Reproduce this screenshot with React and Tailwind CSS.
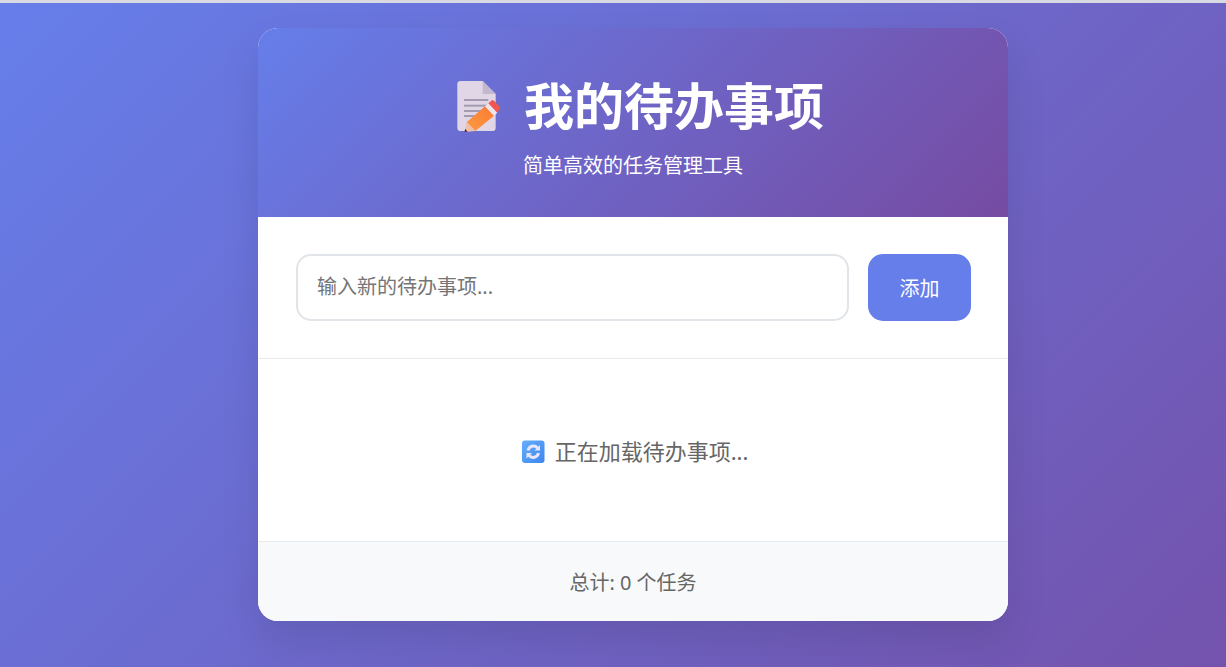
const font = { fontFamily: '"Noto Sans", "Noto Sans CJK SC", sans-serif' };

// drawn on the 3x crop grid of the emoji, hence the odd viewBox
const NoteIcon = () => (
  <svg width="46" height="52" viewBox="48 30 138 156" className="shrink-0">
    <defs>
      <linearGradient id="pencilBody" x1="0" y1="1" x2="1" y2="0">
        <stop offset="0" stopColor="#fb9a45" />
        <stop offset="1" stopColor="#fb7a30" />
      </linearGradient>
    </defs>
    <path d="M52 43a10 10 0 0 1 10-10h66l39 39v101a10 10 0 0 1-10 10H62a10 10 0 0 1-10-10z" fill="#e0d6e6" />
    <path d="M128 33l39 39h-39z" fill="#c3b8d0" />
    <g fill="#a39bb0">
      <rect x="72" y="87" width="73" height="6" />
      <rect x="72" y="104" width="73" height="6" />
      <rect x="72" y="120" width="73" height="6" />
      <rect x="72" y="135" width="40" height="6" />
    </g>
    <path d="M80 157l55-48 27 28-56 46z" fill="url(#pencilBody)" />
    <path d="M135 109l10-9 27 28-10 9z" fill="#efe4ea" />
    <path d="M145 100l9-8a6 6 0 0 1 8 0l17 18a6 6 0 0 1 0 8l-7 10z" fill="#f0574f" />
    <path d="M80 157l26 26-31 3z" fill="#efc0a8" />
    <path d="M75 176l8 9-9 1z" fill="#4a2645" />
  </svg>
);

const RefreshIcon = () => (
  <svg width="24" height="24" viewBox="0 0 24 24" className="shrink-0">
    <defs>
      <linearGradient id="refreshBg" x1="0" y1="0" x2="1" y2="1">
        <stop offset="0" stopColor="#63aefc" />
        <stop offset="1" stopColor="#3f86ee" />
      </linearGradient>
    </defs>
    <rect x="1" y="0.500" width="22.500" height="22.500" rx="3" fill="url(#refreshBg)" />
    <g fill="none" stroke="#e9e6fb" strokeWidth="3">
      <path d="M7 10.500a5.500 5.500 0 0 1 9.500-2.500" />
      <path d="M17.500 13a5.500 5.500 0 0 1-9.500 2.500" />
    </g>
    <path d="M19 5v5.500h-5.500z" fill="#e9e6fb" />
    <path d="M5.500 18.500V13H11z" fill="#e9e6fb" />
  </svg>
);

export default function App() {
  return (
    <div className="min-h-screen bg-[linear-gradient(135deg,#667eea_0%,#764ba2_118%)] border-t-[3px] border-[#d9d9e3] pt-[25px] pb-[46px]" style={font}>
      <div className="ml-[258px] w-[750px] rounded-[20px] overflow-hidden bg-white shadow-[0_20px_40px_rgba(0,0,0,0.1)]">
        <header className="h-[189px] bg-[linear-gradient(135deg,#667eea_0%,#764ba2_100%)] text-white flex flex-col items-center pt-[44px]">
          <h1 className="flex items-center gap-[22px] text-[50px] font-bold leading-[68px] ml-[14px]">
            <NoteIcon />
            <span>我的待办事项</span>
          </h1>
          <p className="text-[20px] leading-[28px] mt-[12px]">简单高效的任务管理工具</p>
        </header>

        <div className="flex gap-[19px] pl-[38px] pr-[37px] py-[37px] border-b border-[#e9ecef]">
          <input
            type="text"
            placeholder="输入新的待办事项..."
            className="flex-1 min-w-0 h-[67px] rounded-[15px] border-2 border-[#e1e5e9] px-[19px] pb-[2px] text-[20px] outline-none placeholder:text-[#757575]"
            style={font}
          />
          <button className="w-[103px] h-[67px] rounded-[15px] bg-[#667eea] text-white text-[20px] pt-[3px]">添加</button>
        </div>

        <div className="h-[182px] flex items-center justify-center gap-[10px] text-[22px] text-[#666666] pt-[3px] pl-[3px]">
          <RefreshIcon />
          <span>正在加载待办事项...</span>
        </div>

        <footer className="h-[80px] bg-[#f8f9fa] border-t border-[#e9ecef] flex items-center justify-center text-[20px] text-[#666666] pt-[3px]">
          总计: 0 个任务
        </footer>
      </div>
    </div>
  );
}
